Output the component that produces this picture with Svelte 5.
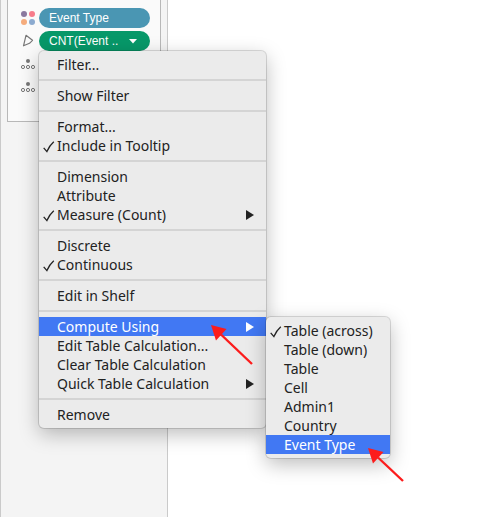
<script>
  const groups = [
    [{ label: 'Filter...' }],
    [{ label: 'Show Filter' }],
    [{ label: 'Format...' }, { label: 'Include in Tooltip', checked: true }],
    [
      { label: 'Dimension' },
      { label: 'Attribute' },
      { label: 'Measure (Count)', checked: true, more: true },
    ],
    [{ label: 'Discrete' }, { label: 'Continuous', checked: true }],
    [{ label: 'Edit in Shelf' }],
    [
      {
        label: 'Compute Using',
        more: true,
        active: true,
        children: [
          { label: 'Table (across)', checked: true },
          { label: 'Table (down)' },
          { label: 'Table' },
          { label: 'Cell' },
          { label: 'Admin1' },
          { label: 'Country' },
          { label: 'Event Type', active: true, pointed: true },
        ],
      },
      { label: 'Edit Table Calculation...' },
      { label: 'Clear Table Calculation' },
      { label: 'Quick Table Calculation', more: true },
    ],
    [{ label: 'Remove' }],
  ];
</script>

{#snippet detailIcon()}
  <svg class="icon" width="16" height="14" viewBox="0 0 16 14" aria-hidden="true">
    <circle cx="8" cy="4" r="2" fill="#777" />
    <g fill="none" stroke="#777" stroke-width="1">
      <circle cx="3" cy="10" r="1.600" />
      <circle cx="8" cy="10" r="1.600" />
      <circle cx="13" cy="10" r="1.600" />
    </g>
  </svg>
{/snippet}

{#snippet pointer(kind)}
  <svg class="pointer {kind}" width="44" height="42" viewBox="0 0 44 42" aria-hidden="true">
    {#if kind === 'long'}
      <path d="M10 9.500L41 39" stroke="#fc1c1c" stroke-width="2.400" />
    {:else}
      <path d="M10 9.500L35 33" stroke="#fc1c1c" stroke-width="2.400" />
    {/if}
    <path d="M0 0L15.500 4L5 15.500Z" fill="#fc1c1c" />
  </svg>
{/snippet}

{#snippet entry(item)}
  <li role="none">
    <button
      type="button"
      class="item"
      class:active={item.active}
      role={item.checked ? 'menuitemcheckbox' : 'menuitem'}
      aria-checked={item.checked ? 'true' : undefined}
      aria-haspopup={item.more ? 'menu' : undefined}
    >
      <span class="mark">
        {#if item.checked}
          <svg width="12" height="12" viewBox="0 0 12 12" aria-hidden="true">
            <path d="M0.700 6.800L3.900 10.600Q6.500 4.500 10.800 0.800" fill="none" stroke="#222" stroke-width="1.300" />
          </svg>
        {/if}
      </span>
      <span class="label">{item.label}</span>
      {#if item.more}
        <svg class="more" width="8" height="10" viewBox="0 0 8 10" aria-hidden="true">
          <path d="M0 0L8 5L0 10Z" fill="currentColor" />
        </svg>
      {/if}
    </button>
    {#if item.children}
      <ul class="menu submenu" role="menu" aria-label={item.label}>
        {#each item.children as child}
          {@render entry(child)}
        {/each}
      </ul>
      {@render pointer('long')}
    {/if}
    {#if item.pointed}
      {@render pointer('short')}
    {/if}
  </li>
{/snippet}

<main>
  <aside>
    <section class="card" aria-label="Marks">
      <div class="row">
        <svg class="icon" width="16" height="14" viewBox="0 0 16 14" aria-hidden="true">
          <circle cx="4" cy="3" r="3" fill="#8a799f" />
          <circle cx="12" cy="3" r="3" fill="#f77c8b" />
          <circle cx="4" cy="11" r="3" fill="#f5ac7d" />
          <circle cx="12" cy="11" r="3" fill="#8cabd0" />
        </svg>
        <button type="button" class="pill blue">Event Type</button>
      </div>
      <div class="row">
        <svg class="icon" width="16" height="14" viewBox="0 0 16 14" aria-hidden="true">
          <path d="M6 1.300L12.500 6.300L9.500 9.300L3.500 11.800Z" fill="none" stroke="#777" stroke-width="1.200" stroke-linejoin="round" />
        </svg>
        <div class="anchor">
          <button type="button" class="pill green">
            <span>CNT(Event ..</span>
            <svg width="8" height="5" viewBox="0 0 8 5" aria-hidden="true"><path d="M0 0H8L4 4.500Z" fill="#fff" /></svg>
          </button>
          <ul class="menu main-menu" role="menu" aria-label="CNT(Event ..">
            {#each groups as group, i}
              {#if i > 0}<li class="separator" role="separator"></li>{/if}
              {#each group as item}
                {@render entry(item)}
              {/each}
            {/each}
          </ul>
        </div>
      </div>
      <div class="row">{@render detailIcon()}</div>
      <div class="row">{@render detailIcon()}</div>
    </section>
  </aside>
</main>

<style>
  :global(body) {
    margin: 0;
    background: #fff;
  }
  main {
    display: flex;
    min-height: 100vh;
    overflow: hidden;
    font-family: 'Noto Sans', sans-serif;
  }
  aside {
    box-sizing: border-box;
    width: 168px;
    padding: 0 6px;
    background: #f4f4f4;
    border: solid #cacaca;
    border-width: 0 1px;
  }
  .card {
    display: flex;
    flex-direction: column;
    gap: 3px;
    padding: 8px 10px 24px 12px;
    background: #fafafa;
    border: 1px solid #b8b8b8;
    border-top: 0;
  }
  .row {
    display: flex;
    align-items: center;
    gap: 3px;
    height: 20px;
  }
  .row > :last-child:not(.icon) {
    flex: 1;
  }
  .icon {
    flex: none;
  }
  .anchor {
    position: relative;
  }
  .pill {
    display: flex;
    align-items: center;
    justify-content: space-between;
    width: 100%;
    height: 20px;
    padding: 0 13px 0 10px;
    border: 0;
    border-radius: 10px;
    color: #fff;
    font: 12px/20px 'Liberation Sans', sans-serif;
    white-space: nowrap;
  }
  .blue {
    background: #4a96b3;
  }
  .green {
    background: #079869;
  }
  .menu {
    position: absolute;
    box-sizing: border-box;
    margin: 0;
    padding: 4px 0;
    list-style: none;
    background: #ebebeb;
    border-radius: 5px;
    box-shadow: 0 0 0 1px #0002, 0 6px 20px #0004;
  }
  .main-menu {
    top: 20px;
    left: 0;
    z-index: 1;
    width: 227px;
  }
  .submenu {
    top: 0;
    left: 100%;
    z-index: 1;
    width: 124px;
  }
  li {
    position: relative;
  }
  .item {
    display: flex;
    align-items: center;
    width: 100%;
    height: 19px;
    padding: 0 12px 0 4px;
    border: 0;
    background: none;
    color: #222;
    font: 14px/19px 'Noto Sans', sans-serif;
    white-space: nowrap;
  }
  .item.active {
    background: #4178f3;
    color: #fff;
  }
  .mark {
    display: flex;
    flex: none;
    width: 14px;
    padding-top: 2px;
  }
  .more {
    margin-left: auto;
  }
  .separator {
    height: 2px;
    margin: 5px 0;
    background: #d4d4d4;
  }
  .pointer {
    position: absolute;
    z-index: 2;
    pointer-events: none;
  }
  .long {
    top: 8px;
    left: 172px;
  }
  .short {
    top: 13px;
    left: 102px;
  }
</style>
